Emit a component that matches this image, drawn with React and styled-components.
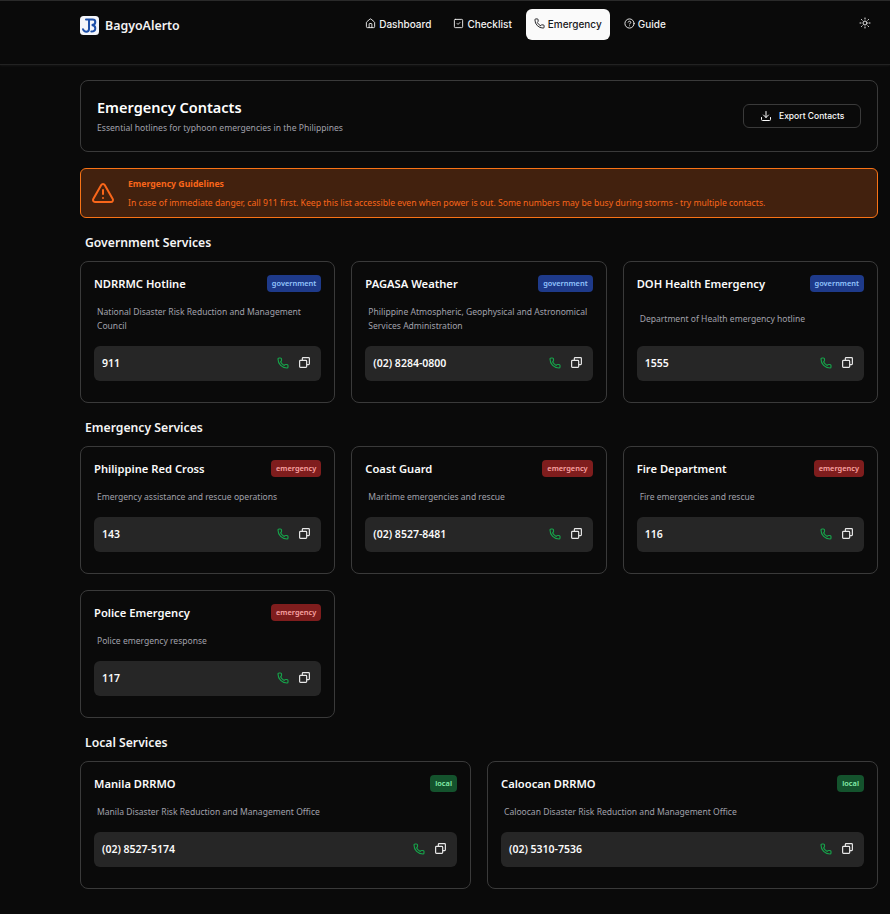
import React from "react";
import styled, { createGlobalStyle } from "styled-components";
import {
  House,
  SquareCheck,
  Phone,
  CircleHelp,
  Sun,
  Download,
  TriangleAlert,
} from "lucide-react";

const GlobalStyle = createGlobalStyle`
  html, body {
    margin: 0;
    padding: 0;
    background: #0a0a0a;
    color: #fafafa;
    font-family: "Noto Sans", "Open Sans", sans-serif;
  }
  * { box-sizing: border-box; }
  svg { flex-shrink: 0; }
`;

const Header = styled.header`
  display: flex;
  justify-content: space-between;
  align-items: flex-start;
  height: 65px;
  padding: 8px 19px 0 80px;
  border-top: 1px solid #2a2a2a;
  border-bottom: 1px solid #222;
  box-shadow: 0 1px 2px rgba(255, 255, 255, 0.05);
`;

const Brand = styled.div`
  display: flex;
  align-items: center;
  gap: 6px;
  width: 100px;
  height: 32px;
  white-space: nowrap;
  font-size: 12.4px;
  font-weight: 600;
  color: #f2f2f2;
`;

const Nav = styled.nav`
  display: flex;
  gap: 6px;
  margin-right: 8px;
`;

const NavItem = styled.a`
  display: flex;
  align-items: center;
  gap: 3px;
  height: 31px;
  padding: 0 8px 2px;
  border-radius: 6px;
  font-family: Inter, sans-serif;
  font-size: 10px;
  font-weight: 500;
  color: ${(p) => (p.$active ? "#18181b" : "#f2f2f2")};
  background: ${(p) => (p.$active ? "#fafafa" : "transparent")};
`;

const ThemeButton = styled.button`
  display: flex;
  align-items: center;
  height: 28px;
  padding: 0;
  border: 0;
  background: none;
  color: #e8e8e8;
`;

const Main = styled.main`
  display: flex;
  flex-direction: column;
  gap: 16px;
  padding: 15px 12px 24px 80px;
`;

const TitleCard = styled.section`
  display: flex;
  justify-content: space-between;
  align-items: center;
  height: 72px;
  padding: 0 16px;
  border: 1px solid #3a3a3a;
  border-radius: 8px;
`;

const PageTitle = styled.h1`
  margin: 0;
  font-size: 14.5px;
  line-height: 20px;
  font-weight: 600;
  color: #fff;
`;

const PageSub = styled.p`
  margin: 5px 0 0;
  font-size: 8.6px;
  line-height: 13px;
  color: #a1a1aa;
`;

const ExportButton = styled.button`
  display: flex;
  align-items: center;
  gap: 7px;
  width: 118px;
  height: 24px;
  padding: 0 16px;
  border: 1px solid #3a3a3a;
  border-radius: 6px;
  background: #0a0a0a;
  color: #fafafa;
  font-family: Inter, sans-serif;
  font-size: 8.5px;
  font-weight: 500;
  white-space: nowrap;
`;

const Alert = styled.section`
  display: flex;
  align-items: center;
  gap: 13px;
  height: 50px;
  padding: 0 10px;
  border: 1px solid #f97316;
  border-radius: 6px;
  background: #42210e;
  color: #f9661a;
`;

const AlertBody = styled.div`
  margin-top: 2px;
`;

const AlertTitle = styled.div`
  font-size: 8.7px;
  line-height: 13px;
  font-weight: 700;
`;

const AlertText = styled.div`
  margin-top: 6px;
  font-size: 8.63px;
  line-height: 13px;
`;

const Section = styled.section`
  display: flex;
  flex-direction: column;
  gap: 9px;
`;

const SectionTitle = styled.h2`
  margin: 0 0 0 5px;
  font-size: 12.2px;
  line-height: 18px;
  font-weight: 600;
  color: #f5f5f5;
`;

const Grid = styled.div`
  display: grid;
  grid-template-columns: repeat(${(p) => p.$cols}, 1fr);
  gap: 16px;
`;

const Card = styled.article`
  display: flex;
  flex-direction: column;
  padding: 13px 13px 21px;
  border: 1px solid #3a3a3a;
  border-radius: 8px;
`;

const CardHead = styled.div`
  display: flex;
  justify-content: space-between;
  align-items: center;
  height: 17px;
`;

const CardTitle = styled.h3`
  margin: 0 0 1px;
  font-size: 11.2px;
  font-weight: 600;
  color: #fafafa;
`;

const badgeColors = {
  government: ["#1e3a8a", "#93c5fd"],
  emergency: ["#7f1d1d", "#fca5a5"],
  local: ["#14532d", "#86efac"],
};

const Badge = styled.span`
  height: 17px;
  padding: 0 5px;
  border-radius: 4px;
  font-size: 7.4px;
  line-height: 17px;
  font-weight: 600;
  background: ${(p) => badgeColors[p.$kind][0]};
  color: ${(p) => badgeColors[p.$kind][1]};
`;

const Description = styled.div`
  display: flex;
  flex: 1;
  align-items: center;
  margin: 13px 0;
  padding-left: 3px;
  font-size: 8.55px;
  line-height: 14px;
  color: #a1a1aa;
`;

const PhoneRow = styled.div`
  display: flex;
  justify-content: space-between;
  align-items: center;
  height: 35px;
  padding: 0 10px 2px 8px;
  border-radius: 6px;
  background: #262626;
`;

const PhoneNumber = styled.span`
  font-size: 10.5px;
  font-weight: 600;
  color: #fafafa;
`;

const RowActions = styled.div`
  display: flex;
  align-items: center;
  gap: 9px;
  color: #e8e8e8;
`;

const CallIcon = styled(Phone)`
  color: #16a34a;
`;

const groups = [
  {
    title: "Government Services",
    cols: 3,
    items: [
      ["NDRRMC Hotline", "government", "National Disaster Risk Reduction and Management Council", "911"],
      ["PAGASA Weather", "government", "Philippine Atmospheric, Geophysical and Astronomical Services Administration", "(02) 8284-0800"],
      ["DOH Health Emergency", "government", "Department of Health emergency hotline", "1555"],
    ],
  },
  {
    title: "Emergency Services",
    cols: 3,
    items: [
      ["Philippine Red Cross", "emergency", "Emergency assistance and rescue operations", "143"],
      ["Coast Guard", "emergency", "Maritime emergencies and rescue", "(02) 8527-8481"],
      ["Fire Department", "emergency", "Fire emergencies and rescue", "116"],
      ["Police Emergency", "emergency", "Police emergency response", "117"],
    ],
  },
  {
    title: "Local Services",
    cols: 2,
    items: [
      ["Manila DRRMO", "local", "Manila Disaster Risk Reduction and Management Office", "(02) 8527-5174"],
      ["Caloocan DRRMO", "local", "Caloocan Disaster Risk Reduction and Management Office", "(02) 5310-7536"],
    ],
  },
];

function Logo() {
  return (
    <svg width="19" height="19" viewBox="0 0 19 19">
      <rect width="19" height="19" rx="3.5" fill="#f4f6fb" />
      <path
        d="M6 3.5h6.5c1.8 0 2.8 1 2.8 2.4 0 1.6-1.3 2.9-3.6 3.1 2.4.2 3.6 1.5 3.6 3.2 0 2-1.6 3.4-4 3.4M9 3.5v9.5c0 1.8-1.2 2.7-2.7 2.7-1.6 0-2.8-.9-3.3-2.4"
        fill="none"
        stroke="#1d4fa8"
        strokeWidth="2"
        strokeLinecap="round"
      />
    </svg>
  );
}

function CopyIcon() {
  return (
    <svg width="13" height="13" viewBox="0 0 24 24" fill="none" stroke="currentColor" strokeWidth="2.2">
      <rect x="3" y="8" width="13" height="13" rx="1.5" />
      <path d="M8 8V4.5A1.5 1.5 0 0 1 9.5 3h10A1.5 1.5 0 0 1 21 4.5v10a1.5 1.5 0 0 1-1.5 1.5H16" />
    </svg>
  );
}

function ContactCard({ name, kind, description, phone }) {
  return (
    <Card>
      <CardHead>
        <CardTitle>{name}</CardTitle>
        <Badge $kind={kind}>{kind}</Badge>
      </CardHead>
      <Description>{description}</Description>
      <PhoneRow>
        <PhoneNumber>{phone}</PhoneNumber>
        <RowActions>
          <CallIcon size={12} strokeWidth={2.3} />
          <CopyIcon />
        </RowActions>
      </PhoneRow>
    </Card>
  );
}

export default function App() {
  return (
    <>
      <GlobalStyle />
      <Header>
        <Brand>
          <Logo />
          BagyoAlerto
        </Brand>
        <Nav>
          <NavItem><House size={11} />Dashboard</NavItem>
          <NavItem><SquareCheck size={11} />Checklist</NavItem>
          <NavItem $active><Phone size={11} />Emergency</NavItem>
          <NavItem><CircleHelp size={11} />Guide</NavItem>
        </Nav>
        <ThemeButton><Sun size={12} /></ThemeButton>
      </Header>
      <Main>
        <TitleCard>
          <div>
            <PageTitle>Emergency Contacts</PageTitle>
            <PageSub>Essential hotlines for typhoon emergencies in the Philippines</PageSub>
          </div>
          <ExportButton><Download size={12} />Export Contacts</ExportButton>
        </TitleCard>
        <Alert>
          <TriangleAlert size={24} />
          <AlertBody>
            <AlertTitle>Emergency Guidelines</AlertTitle>
            <AlertText>
              In case of immediate danger, call 911 first. Keep this list accessible even when power is out. Some numbers may be busy during storms - try multiple contacts.
            </AlertText>
          </AlertBody>
        </Alert>
        {groups.map((g) => (
          <Section key={g.title}>
            <SectionTitle>{g.title}</SectionTitle>
            <Grid $cols={g.cols}>
              {g.items.map(([name, kind, description, phone]) => (
                <ContactCard key={name} name={name} kind={kind} description={description} phone={phone} />
              ))}
            </Grid>
          </Section>
        ))}
      </Main>
    </>
  );
}
